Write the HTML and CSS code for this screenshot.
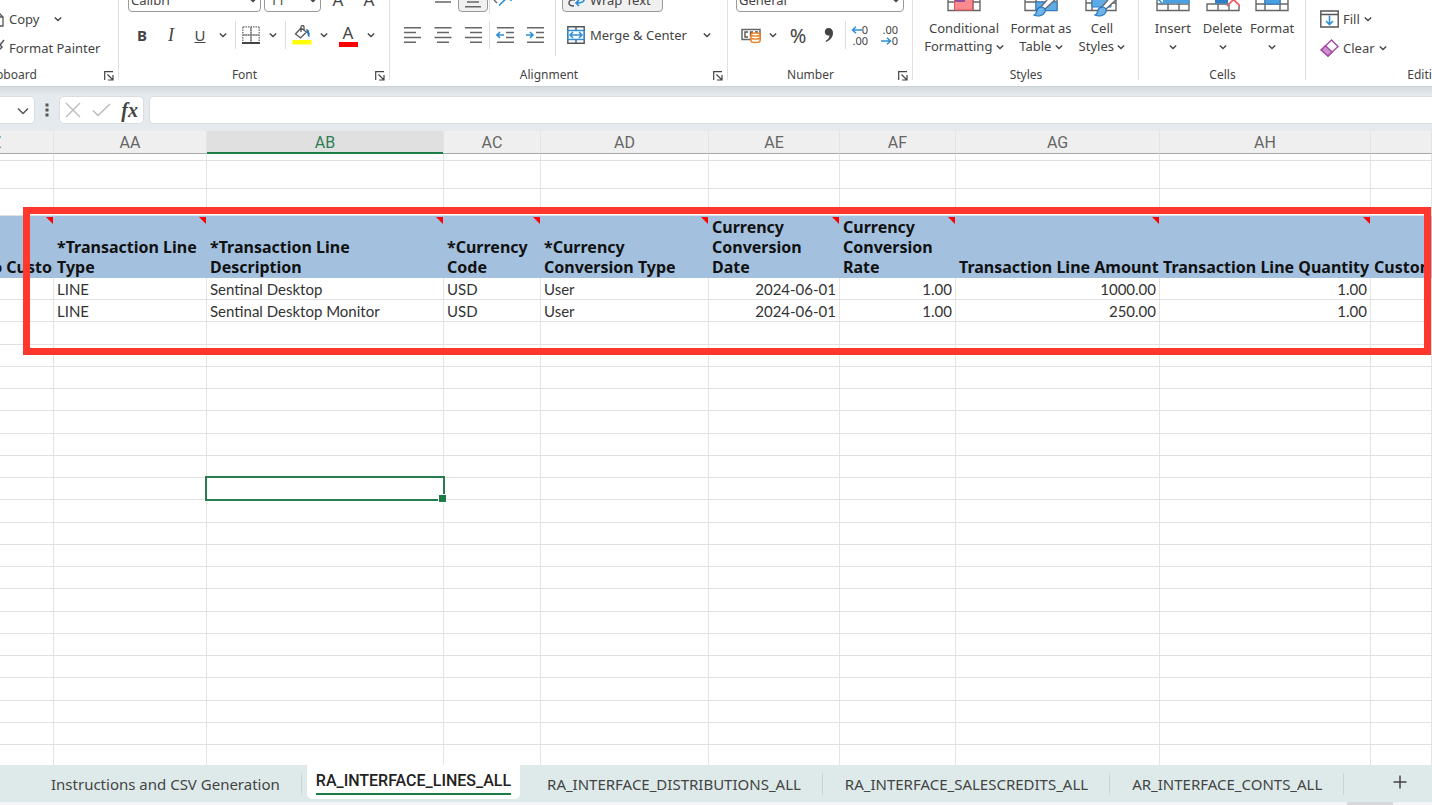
FILE: index.html
```html
<!DOCTYPE html>
<html lang="en">
<head>
<meta charset="utf-8">
<title>Workbook</title>
<link rel="stylesheet" href="styles.css">
</head>
<body>
<svg class="defs" aria-hidden="true">
  <symbol id="chev" viewBox="0 0 8 8"><path d="M.8 2.500 4 5.500 7.200 2.500" fill="none" stroke="#444" stroke-width="1.400"/></symbol>
  <symbol id="launch" viewBox="0 0 10 10"><path d="M.7 9V.7H9M3.500 3.500 8.500 8.500M9 4v5H4" fill="none" stroke="#444" stroke-width="1.200"/></symbol>
</svg>
<header class="ribbon">
  <section class="group clipboard">
    <div class="stack">
      <button class="line"><svg width="16" height="18" viewBox="0 0 16 18"><path d="M1 2h8l5 5v9H1M8 2v5h6M4 10h7M4 13h7" fill="none" stroke="#555" stroke-width="1.300"/></svg>Copy<svg class="chev far"><use href="#chev"/></svg></button>
      <button class="line"><svg width="16" height="18" viewBox="0 0 16 18"><path d="M15 1 11 6M9 4l4 4-3 3-4-4z" fill="none" stroke="#555" stroke-width="1.500"/><path d="M7 8l4 3-3 4-5-2z" fill="#e8813a"/></svg>Format Painter</button>
    </div>
    <div class="caption"><span>Clipboard</span><button class="launch" aria-label="Clipboard settings"><svg><use href="#launch"/></svg></button></div>
  </section>
  <section class="group font">
    <div class="rows">
      <div class="row gap3">
        <button class="combo wide">Calibri<svg class="chev"><use href="#chev"/></svg></button>
        <button class="combo narrow">11<svg class="chev"><use href="#chev"/></svg></button>
        <button class="tool w28 grow">A</button><button class="tool w28 grow">A</button>
      </div>
      <div class="row">
        <button class="tool w28"><b>B</b></button><button class="tool w30"><i>I</i></button><button class="tool w28"><u>U</u></button><button class="tool w18" aria-label="Underline options"><svg class="chev"><use href="#chev"/></svg></button>
        <span class="sep"></span>
        <button class="tool w26" aria-label="Borders"><svg width="18" height="18" viewBox="0 0 18 18"><path d="M1 .8h16M1 9h16M9 1v15M.8 1v16M17.200 1v16" stroke="#666" stroke-width="1.200" stroke-dasharray="1.500 1"/><path d="M1 9h16M9 1v15" stroke="#777" stroke-width="1"/><path d="M0 17h18" stroke="#444" stroke-width="2"/></svg></button><button class="tool w18" aria-label="Border options"><svg class="chev"><use href="#chev"/></svg></button>
        <span class="sep"></span>
        <button class="tool w28" aria-label="Fill colour"><svg width="20" height="20" viewBox="0 0 20 20"><path d="M9 3 3.500 9l5 4 6-6zM9 7V2c0-2 3-2 3 0v3" fill="#fff" stroke="#555" stroke-width="1.300"/><path d="M14 4c3 0 4 3 3.500 8-1 0-2-1-2-3z" fill="#1c74bd"/><path d="M.5 15h19v4.500H.5z" fill="#ff0"/></svg></button><button class="tool w16" aria-label="Fill options"><svg class="chev"><use href="#chev"/></svg></button>
        <button class="tool w32 fontcolor">A</button><button class="tool w14" aria-label="Font colour options"><svg class="chev"><use href="#chev"/></svg></button>
      </div>
    </div>
    <div class="caption"><span>Font</span><button class="launch" aria-label="Font settings"><svg><use href="#launch"/></svg></button></div>
  </section>
  <section class="group align">
    <div class="halves">
      <div class="rows">
        <div class="row">
          <button class="tool w30" aria-label="Top align"></button>
          <button class="tool w30" aria-label="Middle align"><svg width="18" height="24" viewBox="0 -12 18 24"><path d="M3-9h12M0-4h18M1 2h16" stroke="#666" stroke-width="1.600"/></svg></button>
          <button class="tool w30 pressed" aria-label="Bottom align"><svg width="18" height="24" viewBox="0 -12 18 24"><path d="M3-3h12M3 2h12M1 6.700h16" stroke="#666" stroke-width="1.600"/></svg></button>
          <span class="sep thin"></span>
          <button class="tool w30" aria-label="Orientation"><svg width="24" height="24" viewBox="0 -12 24 24"><path d="M6 5.500 18-6M11-6h7V1" stroke="#2f8fd6" stroke-width="1.600" fill="none"/><path d="M1 0l3 3" stroke="#666" stroke-width="1.400"/></svg></button>
          <button class="tool w30" aria-label="Orientation options"></button>
        </div>
        <div class="row">
          <button class="tool w30" aria-label="Align left"><svg width="18" height="18" viewBox="0 0 18 18"><path d="M0 1.700h17M0 6.600h12M0 11.400h17M0 16.300h12" stroke="#666" stroke-width="1.500"/></svg></button>
          <button class="tool w30" aria-label="Align centre"><svg width="18" height="18" viewBox="0 0 18 18"><path d="M.5 1.700h17M3 6.600h12M.5 11.400h17M3 16.300h12" stroke="#666" stroke-width="1.500"/></svg></button>
          <button class="tool w30" aria-label="Align right"><svg width="18" height="18" viewBox="0 0 18 18"><path d="M1 1.700h17M6 6.600h12M1 11.400h17M6 16.300h12" stroke="#666" stroke-width="1.500"/></svg></button>
          <span class="sep thin"></span>
          <button class="tool w30" aria-label="Decrease indent"><svg width="18" height="18" viewBox="0 0 18 18"><path d="M1 1.700h17M10 6.600h8M10 11.400h8M1 16.300h17" stroke="#666" stroke-width="1.500"/><path d="M8 9H1M4 6 1 9l3 3" stroke="#2f8fd6" stroke-width="1.600" fill="none"/></svg></button>
          <button class="tool w30" aria-label="Increase indent"><svg width="18" height="18" viewBox="0 0 18 18"><path d="M1 1.700h17M10 6.600h8M10 11.400h8M1 16.300h17" stroke="#666" stroke-width="1.500"/><path d="M0 9h7M4 6l3 3-3 3" stroke="#2f8fd6" stroke-width="1.600" fill="none"/></svg></button>
        </div>
      </div>
      <span class="divider"></span>
      <div class="rows">
        <div class="row"><button class="wrap"><svg width="18" height="24" viewBox="0 -12 18 24"><path d="M7 0C3-1 1 1 1 3s2 3 5 3" stroke="#555" stroke-width="1.500" fill="none"/><path d="M16-3c1 5-2 6-8 6M11 0 8 3l3 3" stroke="#2f8fd6" stroke-width="1.700" fill="none"/></svg>Wrap Text</button></div>
        <div class="row"><button class="merge"><svg width="18" height="18" viewBox="0 0 18 18"><path d="M.8.8h16.400v16.400H.8zM9 1v3M9 14v3" fill="#fff" stroke="#555" stroke-width="1.400"/><path d="M1 4.500h16v9H1z" fill="#fff" stroke="#2f8fd6" stroke-width="1.400"/><path d="M3 9h12M6 6 3 9l3 3M12 6l3 3-3 3" fill="none" stroke="#2f8fd6" stroke-width="1.500"/></svg>Merge &amp; Center<svg class="chev far"><use href="#chev"/></svg></button></div>
      </div>
    </div>
    <div class="caption"><span>Alignment</span><button class="launch" aria-label="Alignment settings"><svg><use href="#launch"/></svg></button></div>
  </section>
  <section class="group number">
    <div class="rows">
      <div class="row"><button class="combo general">General<svg class="chev"><use href="#chev"/></svg></button></div>
      <div class="row">
        <button class="tool w30" aria-label="Accounting format"><svg width="20" height="18" viewBox="0 0 20 18"><path d="M1 3.500h18v10H1z" fill="#fff" stroke="#666" stroke-width="1.500"/><path d="M7 6H4v5h3M12 6H9.500v5M14 6h3" fill="none" stroke="#555" stroke-width="1.400"/><path d="M10 8.500c0-2 9-2 9 0V15c0 2-9 2-9 0z" fill="#fff" stroke="#ea8426" stroke-width="1.500"/><path d="M10 9c1 1.500 8 1.500 9 0M10 12c1 1.500 8 1.500 9 0" fill="none" stroke="#ea8426" stroke-width="1.400"/></svg></button><button class="tool w14" aria-label="Accounting options"><svg class="chev"><use href="#chev"/></svg></button>
        <button class="tool w36 percent">%</button>
        <button class="tool w26" aria-label="Comma style"><svg width="10" height="16" viewBox="0 0 10 16"><path d="M4.500 1C7.500 1 9 3 9 6c0 4-3 7.500-7 9l-.5-1C4 12.500 5.500 10.500 5.500 8.500 2.500 9 .8 7 .8 4.800.8 2.500 2.500 1 4.500 1z" fill="#444"/></svg></button>
        <span class="sep"></span>
        <button class="tool w28 decimals" aria-label="Increase decimal"><span><svg width="11" height="8" viewBox="0 0 11 8"><path d="M11 4H1.500M5 .7 1.500 4 5 7.300" fill="none" stroke="#2f8fd6" stroke-width="1.500"/></svg>0</span><span>.00</span></button>
        <button class="tool w30 decimals" aria-label="Decrease decimal"><span>.00</span><span><svg width="11" height="8" viewBox="0 0 11 8"><path d="M0 4h9.500M6 .7 9.500 4 6 7.300" fill="none" stroke="#2f8fd6" stroke-width="1.500"/></svg>0</span></button>
      </div>
    </div>
    <div class="caption"><span>Number</span><button class="launch" aria-label="Number settings"><svg><use href="#launch"/></svg></button></div>
  </section>
  <section class="group styles">
    <div class="bigs">
      <button class="big w84"><svg width="34" height="34" viewBox="0 -16 34 34"><path d="M1-12h32v21.500H1zM1 1h32M8-12v21M26-12v21" fill="#fff" stroke="#666" stroke-width="1.400"/><path d="M7.500-8h18V9h-18z" fill="#fb8a8e" stroke="#e0565c"/><path d="M8-5h10V1H8z" fill="#8a4f9c"/></svg><span>Conditional<br>Formatting <svg class="chev"><use href="#chev"/></svg></span></button>
      <button class="big w70"><svg width="34" height="34" viewBox="0 -16 34 34"><path d="M1-12h32v21.500H1zM1 1h32M12-12v21" fill="#fff" stroke="#666" stroke-width="1.400"/><path d="M12 1h21v8.500H12z" fill="#5fabe6" stroke="#2a7fc8"/><path d="M33-3 21 8l-4-2L28-7z" fill="#fff" stroke="#666" stroke-width="1.300"/><path d="M17 6c3 0 5 2 4 5-2 4-7 5-11 3 3-1 2-3 3-5 1-2 2-3 4-3z" fill="#6db3ea" stroke="#1f72bb" stroke-width="1.200"/></svg><span>Format as<br>Table <svg class="chev"><use href="#chev"/></svg></span></button>
      <button class="big w52"><svg width="34" height="34" viewBox="0 -16 34 34"><path d="M1-12h30v21.500H1zM1 2h30M7-12v21" fill="#fff" stroke="#666" stroke-width="1.400"/><path d="M7-8h19V6H7z" fill="#5fabe6" stroke="#2a7fc8"/><path d="M33-3 21 8l-4-2L28-7z" fill="#fff" stroke="#666" stroke-width="1.300"/><path d="M17 6c3 0 5 2 4 5-2 4-7 5-11 3 3-1 2-3 3-5 1-2 2-3 4-3z" fill="#6db3ea" stroke="#1f72bb" stroke-width="1.200"/></svg><span>Cell<br>Styles <svg class="chev"><use href="#chev"/></svg></span></button>
    </div>
    <div class="caption"><span>Styles</span></div>
  </section>
  <section class="group cells">
    <div class="bigs">
      <button class="big w50"><svg width="34" height="34" viewBox="0 -16 34 34"><path d="M1-8h32V9.500H1zM1 3h32M12-8V9.500M23-8V9.500" fill="#fff" stroke="#666" stroke-width="1.400"/><path d="M7-6h28v8.500H7z" fill="#4a9fe0"/><path d="M1-3l6 6" stroke="#2f8fd6" stroke-width="1.500"/></svg><span>Insert<br><svg class="chev"><use href="#chev"/></svg></span></button>
      <button class="big w50"><svg width="34" height="34" viewBox="0 -16 34 34"><path d="M1 9.500V3h32v6.500zM12 3v6.500M23 3v6.500" fill="#fff" stroke="#666" stroke-width="1.400"/><path d="M9-6h13v8.500H9z" fill="#2a7fc8"/><path d="M21-10h14V5H24z" fill="#fff"/><path d="M21 5 34-8M21-8 34 5" stroke="#f2575b" stroke-width="1.700"/></svg><span>Delete<br><svg class="chev"><use href="#chev"/></svg></span></button>
      <button class="big w50"><svg width="34" height="34" viewBox="0 -16 34 34"><path d="M1-8h32V9.500H1zM1 3h32M10-8V9.500M25-8V9.500" fill="#fff" stroke="#666" stroke-width="1.400"/><path d="M10-6h15v9H10z" fill="#4a9fe0" stroke="#2a7fc8"/></svg><span>Format<br><svg class="chev"><use href="#chev"/></svg></span></button>
    </div>
    <div class="caption"><span>Cells</span></div>
  </section>
  <section class="group editing">
    <div class="stack">
      <button class="line"><svg width="19" height="18" viewBox="0 0 19 18"><path d="M.8 1h17.400v16H.8zM1 4.500h17" fill="#fff" stroke="#555" stroke-width="1.400"/><path d="M9.500 5.500v9M6 11l3.500 3.500L13 11" fill="none" stroke="#2f8fd6" stroke-width="1.600"/></svg>Fill<svg class="chev"><use href="#chev"/></svg></button>
      <button class="line"><svg width="19" height="18" viewBox="0 0 19 18"><path d="M11.500 1 18 7.500 8 17 1.200 11z" fill="#fff" stroke="#a349a4" stroke-width="1.400"/><path d="M5.500 6.800 1.200 11 8 17l4-4z" fill="#cf8fd0" stroke="#a349a4" stroke-width="1.400"/></svg>Clear<svg class="chev"><use href="#chev"/></svg></button>
    </div>
    <div class="caption"><span>Editing</span></div>
  </section>
</header>

<div class="formula">
  <button class="namebox" aria-label="Name box"><svg width="12" height="8" viewBox="0 0 12 8"><path d="M1 1.500 6 6.500 11 1.500" fill="none" stroke="#555" stroke-width="1.500"/></svg></button>
  <svg class="dots" width="4" height="14" viewBox="0 0 4 14"><path d="M.5.500h3v3h-3zM.5 5.500h3v3h-3zM.5 10.500h3v3h-3z" fill="#555"/></svg>
  <div class="fxbox">
    <button aria-label="Cancel"><svg width="16" height="16" viewBox="0 0 16 16"><path d="M1 1 15 15M15 1 1 15" stroke="#bbb" stroke-width="1.400"/></svg></button>
    <button aria-label="Enter"><svg width="19" height="14" viewBox="0 0 19 14"><path d="M1 7.500 6 12.500 18 1" fill="none" stroke="#bbb" stroke-width="1.500"/></svg></button>
    <button class="fx">fx</button>
  </div>
  <input class="entry" type="text" aria-label="Formula bar">
</div>

<main class="grid">
  <table>
    <colgroup><col class="cZ"><col class="cAA"><col class="cAB"><col class="cAC"><col class="cAD"><col class="cAE"><col class="cAF"><col class="cAG"><col class="cAH"><col></colgroup>
    <thead>
      <tr class="letters"><th>Z<th>AA<th class="on">AB<th>AC<th>AD<th>AE<th>AF<th>AG<th>AH<th></tr>
      <tr class="sliver"><td><td><td><td><td><td><td><td><td><td></tr>
      <tr class="spacer"><td><td><td><td><td><td><td><td><td><td></tr>
      <tr class="spacer short"><td><td><td><td><td><td><td><td><td><td></tr>
      <tr class="titles">
        <th>Ship-to Customer<th>*Transaction Line<br>Type<th>*Transaction Line<br>Description<th>*Currency<br>Code<th>*Currency<br>Conversion Type<th>Currency<br>Conversion<br>Date<th>Currency<br>Conversion<br>Rate<th>Transaction Line Amount<th>Transaction Line Quantity<th>Customer
      </tr>
    </thead>
    <tbody>
      <tr><td><td>LINE<td>Sentinal Desktop<td>USD<td>User<td class="num">2024-06-01<td class="num">1.00<td class="num">1000.00<td class="num">1.00<td></tr>
      <tr><td><td>LINE<td>Sentinal Desktop Monitor<td>USD<td>User<td class="num">2024-06-01<td class="num">1.00<td class="num">250.00<td class="num">1.00<td></tr>
      <tr><td><td><td><td><td><td><td><td><td><td></tr>
      <tr><td><td><td><td><td><td><td><td><td><td></tr>
      <tr><td><td><td><td><td><td><td><td><td><td></tr>
      <tr><td><td><td><td><td><td><td><td><td><td></tr>
      <tr><td><td><td><td><td><td><td><td><td><td></tr>
      <tr><td><td><td><td><td><td><td><td><td><td></tr>
      <tr><td><td><td><td><td><td><td><td><td><td></tr>
      <tr><td><td><td class="selected"><td><td><td><td><td><td><td></tr>
      <tr><td><td><td><td><td><td><td><td><td><td></tr>
      <tr><td><td><td><td><td><td><td><td><td><td></tr>
      <tr><td><td><td><td><td><td><td><td><td><td></tr>
      <tr><td><td><td><td><td><td><td><td><td><td></tr>
      <tr><td><td><td><td><td><td><td><td><td><td></tr>
      <tr><td><td><td><td><td><td><td><td><td><td></tr>
      <tr><td><td><td><td><td><td><td><td><td><td></tr>
      <tr><td><td><td><td><td><td><td><td><td><td></tr>
      <tr><td><td><td><td><td><td><td><td><td><td></tr>
      <tr><td><td><td><td><td><td><td><td><td><td></tr>
      <tr><td><td><td><td><td><td><td><td><td><td></tr>
      <tr><td><td><td><td><td><td><td><td><td><td></tr>
    </tbody>
  </table>
  <div class="highlight"></div>
</main>

<nav class="tabs">
  <a class="tab" href="#instructions">Instructions and CSV Generation</a>
  <a class="tab active" href="#lines"><span>RA_INTERFACE_LINES_ALL</span></a>
  <a class="tab" href="#distributions">RA_INTERFACE_DISTRIBUTIONS_ALL</a>
  <a class="tab" href="#salescredits">RA_INTERFACE_SALESCREDITS_ALL</a>
  <a class="tab" href="#conts">AR_INTERFACE_CONTS_ALL</a>
  <button class="add" aria-label="New sheet"><svg width="14" height="14" viewBox="0 0 14 14"><path d="M7 .5v13M.5 7h13" stroke="#444" stroke-width="1.500"/></svg></button>
</nav>
<div class="scroll"><span></span></div>
</body>
</html>
```

FILE: styles.css
```css
* { box-sizing: border-box; }
html, body { height: 100%; }
body {
  margin: 0;
  display: flex;
  flex-direction: column;
  overflow: hidden;
  background: #fff;
  color: #444;
  font-family: "Noto Sans", sans-serif;
  font-size: 13px;
}
button {
  border: 0;
  padding: 0;
  background: none;
  color: inherit;
  font: inherit;
  white-space: nowrap;
}
svg { flex: none; }
.defs { display: none; }
.chev { width: 8px; height: 8px; }

/* Ribbon: the groups hang from the bottom edge, the upper part is scrolled away */
.ribbon {
  flex: none;
  display: flex;
  align-items: flex-end;
  height: 87px;
  margin-left: -40px;
  overflow: hidden;
  background: #fff;
  border-bottom: 1px solid #cdd2d5;
}
.group {
  flex: none;
  display: flex;
  flex-direction: column;
  justify-content: flex-end;
  height: 110px;
  padding-bottom: 3px;
  background: linear-gradient(#e1e1e1, #e1e1e1) right top / 1px 104px no-repeat;
}
.clipboard { width: 159px; }
.font { width: 271px; }
.align { width: 338px; }
.number { width: 185px; }
.styles { width: 226px; }
.cells { width: 167px; }
.editing { width: 242px; background: none; }

.caption { display: flex; align-items: center; height: 16px; font-size: 12px; line-height: 16px; }
.caption span { flex: 1; text-align: center; }
.clipboard .caption span { padding-right: 40px; }
.launch { width: 20px; height: 16px; }
.launch svg { display: block; width: 10px; height: 10px; margin: 2px auto 0; }

.rows { display: flex; flex-direction: column; gap: 11px; margin-bottom: 20px; }
.row { display: flex; align-items: center; height: 24px; }
.gap3 { gap: 3px; }
.font > .rows { padding-left: 9px; }
.number > .rows { padding-left: 8px; }

.tool { display: flex; align-items: center; justify-content: center; height: 24px; font-size: 15px; }
.w14 { width: 14px; }
.w16 { width: 16px; }
.w18 { width: 18px; }
.w26 { width: 26px; }
.w28 { width: 28px; }
.w30 { width: 30px; }
.w32 { width: 32px; }
.w36 { width: 36px; }
.w50 { width: 50px; }
.w52 { width: 52px; }
.w70 { width: 70px; }
.w84 { width: 84px; }
.tool i { font-family: "Liberation Serif", serif; font-size: 18px; }
.grow { font-size: 17px; line-height: 16px; }
.fontcolor {
  align-items: flex-start;
  font-size: 17px;
  line-height: 20px;
  background: linear-gradient(#f00, #f00) center 19px / 19px 5px no-repeat;
}
.percent { font-size: 20px; }
.decimals { flex-direction: column; align-items: flex-end; padding-right: 8px; font-size: 11px; line-height: 11px; }
.sep { width: 6px; height: 28px; background: linear-gradient(#ddd, #ddd) center / 1px 100% no-repeat; }
.thin { width: 2px; }

.combo, .wrap {
  display: flex;
  align-items: center;
  height: 24px;
  border: 1px solid #999;
  border-radius: 4px;
  background: #fff;
  line-height: 20px;
}
.combo { justify-content: space-between; padding: 0 3px 0 2px; }
.wide { width: 133px; }
.narrow { width: 57px; padding-left: 5px; }
.general { width: 168px; }
.wrap { gap: 4px; width: 101px; padding-left: 5px; background: #f0f0f0; }
.pressed { border: 1px solid #999; border-radius: 4px; background: #f0f0f0; }

.halves { display: flex; padding-left: 8px; }
.divider { width: 1px; height: 68px; margin: 0 6px 0 5px; background: #ddd; }
.merge { display: flex; align-items: center; gap: 5px; padding-left: 5px; }
.far { margin-left: 11px; }

.bigs { display: flex; align-items: flex-end; padding: 0 9px; margin-bottom: 12px; }
.big { display: flex; flex-direction: column; align-items: center; line-height: 18px; }

.stack { display: flex; flex-direction: column; gap: 5px; margin-bottom: 7px; padding-left: 14px; }
.clipboard .stack { padding-left: 29px; }
.line { display: flex; align-items: center; gap: 4px; height: 24px; }

/* Formula bar */
.formula {
  flex: none;
  display: flex;
  align-items: center;
  height: 44px;
  padding-top: 1px;
  background: linear-gradient(#d4dade, #e4eaee 8px);
}
.namebox, .fxbox, .entry { height: 28px; border: 1px solid #d9dee1; border-radius: 5px; background: #fff; }
.namebox { width: 35px; border-left: 0; border-radius: 0 5px 5px 0; padding-left: 12px; }
.dots { margin: 0 10px; }
.fxbox { display: flex; align-items: center; justify-content: space-between; width: 85px; padding: 0 5px; }
.fxbox svg { display: block; }
.fx { font-family: "Liberation Serif", serif; font-style: italic; font-weight: bold; font-size: 20px; line-height: 20px; }
.entry { flex: 1; min-width: 0; margin-left: 5px; border-right: 0; border-radius: 5px 0 0 5px; }

/* Sheet */
.grid { position: relative; flex: 1; min-height: 0; overflow: hidden; }
table {
  width: calc(100% + 60px);
  margin-left: -60px;
  table-layout: fixed;
  border-collapse: separate;
  border-spacing: 0;
}
.cZ { width: 114px; }
.cAA { width: 153px; }
.cAB { width: 237px; }
.cAC { width: 97px; }
.cAD { width: 168px; }
.cAE { width: 131px; }
.cAF { width: 116px; }
.cAG { width: 204px; }
.cAH { width: 211px; }
th, td {
  height: 22px;
  padding: 0 3px;
  border-right: 1px solid #e4e4e4;
  border-bottom: 1px solid #e1e1e1;
  overflow: hidden;
  white-space: nowrap;
}
.letters th {
  height: 23px;
  padding-top: 1px;
  background: #efefef;
  border-bottom-color: #aaa;
  color: #666;
  font-family: Roboto, sans-serif;
  font-size: 16px;
  font-weight: normal;
  line-height: 21px;
}
.letters .on {
  background: #e0e0e0;
  color: #2f7d55;
  border-bottom-color: #1d7c46;
  box-shadow: inset 0 -1px #1d7c46;
}
.sliver td { height: 7px; }
.spacer td { height: 28px; }
.short td { height: 27px; }
.titles th {
  position: relative;
  height: 62px;
  background: #a3c1df;
  border-color: #a3c1df;
  color: #111;
  font-size: 16px;
  line-height: 20px;
  text-align: left;
  vertical-align: bottom;
}
.titles th:first-child { padding-left: 6px; }
.titles th::after {
  content: "";
  position: absolute;
  top: 1px;
  right: 0;
  width: 7px;
  height: 7px;
  background: #f00;
  clip-path: polygon(0 0, 100% 0, 100% 100%);
}
.titles th:last-child::after { display: none; }
tbody td { color: #333; font-family: Lato, sans-serif; font-size: 15px; line-height: 20px; }
tbody tr:nth-child(4n+3) td { height: 23px; }
.num { text-align: right; }
.selected { position: relative; overflow: visible; }
.selected::before {
  content: "";
  position: absolute;
  inset: -2px;
  border: 2px solid #2b7b52;
}
.selected::after {
  content: "";
  position: absolute;
  right: -4px;
  bottom: -4px;
  width: 7px;
  height: 7px;
  border: 1px solid #fff;
  background: #1d7c46;
}
.highlight {
  position: absolute;
  top: 76px;
  left: 23px;
  right: 1px;
  height: 148px;
  border: 7px solid #ff372c;
}

/* Sheet tabs */
.tabs { flex: none; display: flex; height: 37px; padding-left: 29px; background: #ddeae9; }
.tab {
  padding: 0 22px;
  color: #444;
  font-size: 15px;
  line-height: 38px;
  text-decoration: none;
  white-space: nowrap;
  background: linear-gradient(#c9d4d3, #c9d4d3) right 8px / 1px 22px no-repeat;
}
.active {
  height: 34px;
  margin: 0 5px;
  padding: 0 9px;
  border-radius: 0 0 5px 5px;
  background: #fff;
  color: #222;
  font-family: Roboto, sans-serif;
  font-size: 16px;
  font-weight: 500;
  line-height: 20px;
}
.active span { display: block; padding-top: 6px; border-bottom: 2px solid #1d7c46; height: 30px; }
.add { width: 30px; margin-left: 41px; }
.scroll { flex: none; height: 3px; background: #f4f4f4; }
.scroll span { display: block; width: 46px; height: 3px; margin: 0 39px 0 auto; background: #d8d8d8; }
```
